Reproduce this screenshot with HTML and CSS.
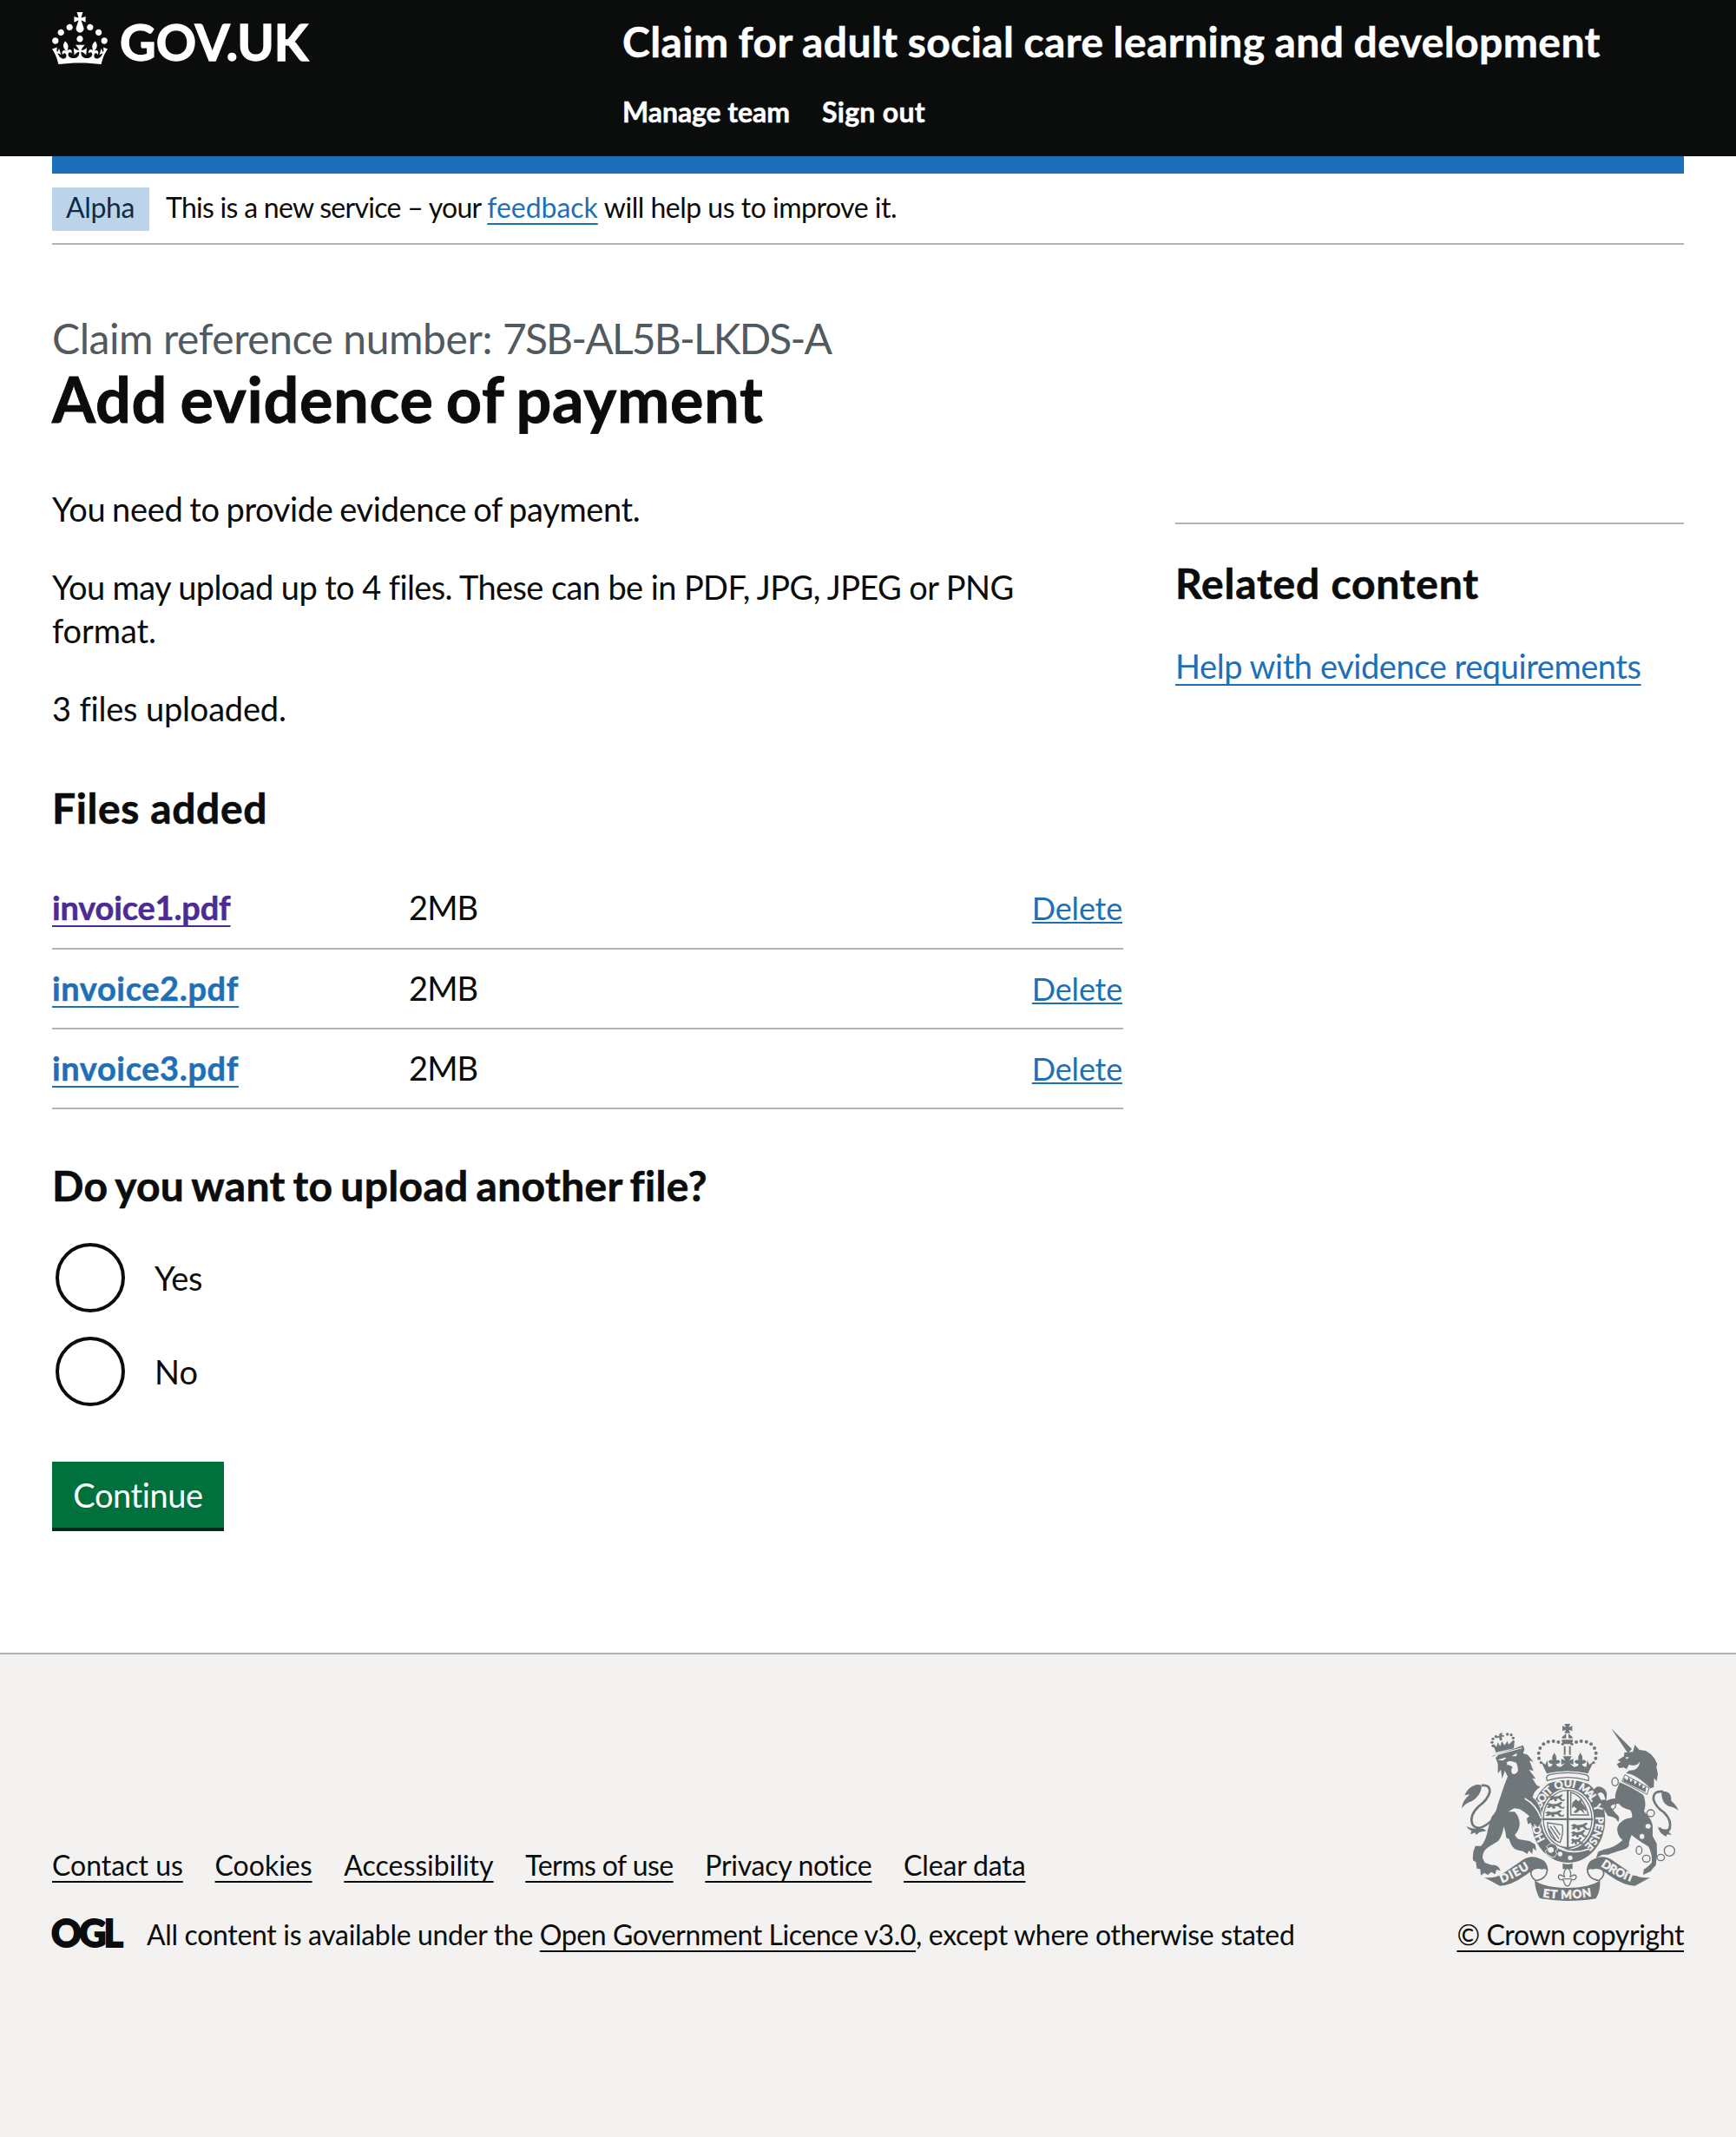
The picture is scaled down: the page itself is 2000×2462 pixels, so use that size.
FILE: index.html
```html
<!DOCTYPE html>
<html lang="en">
<head>
<meta charset="utf-8">
<title>Add evidence of payment</title>
<link rel="stylesheet" href="styles.css">
</head>
<body>
<header class="header">
  <div class="header-inner">
    <svg class="logo" viewBox="0 0 149 30" aria-label="GOV.UK">
      <path d="M22.6 10.4c-1 .4-2-.1-2.4-1-.4-.9.1-2 1-2.4.9-.4 2 .1 2.4 1s-.1 2-1 2.4m-5.9 6.7c-.9.4-2-.1-2.4-1-.4-.9.1-2 1-2.4.9-.4 2 .1 2.4 1s-.1 2-1 2.4m10.8-3.7c-1 .4-2-.1-2.4-1-.4-.9.1-2 1-2.4.9-.4 2 .1 2.4 1s0 2-1 2.4m3.3 4.8c-1 .4-2-.1-2.4-1-.4-.9.1-2 1-2.4.9-.4 2 .1 2.4 1s-.1 2-1 2.4M17 4.7l2.3 1.2V2.5l-2.3.7-.2-.2.9-3h-3.4l.9 3-.2.2c-.1.1-2.3-.7-2.3-.7v3.4L15 4.7c.1.1.1.2.2.2l-1.3 4c-.1.2-.1.4-.1.6 0 1.1.8 2 1.9 2.2h.7c1-.2 1.9-1.1 1.9-2.1 0-.2 0-.4-.1-.6l-1.3-4c-.1-.2 0-.2.1-.3m-7.6 5.7c.9.4 2-.1 2.4-1 .4-.9-.1-2-1-2.4-.9-.4-2 .1-2.4 1s0 2 1 2.4m-5 3c.9.4 2-.1 2.4-1 .4-.9-.1-2-1-2.4-.9-.4-2 .1-2.4 1s.1 2 1 2.4m-3.2 4.8c.9.4 2-.1 2.4-1 .4-.9-.1-2-1-2.4-.9-.4-2 .1-2.4 1s0 2 1 2.4m14.8 11c4.4 0 8.6.3 12.3.8 1.1-4.5 2.4-7 3.7-8.8l-2.5-.9c.2 1.3.3 1.9 0 2.7-.4-.4-.8-1.1-1.1-2.3l-1.2 4c.7-.5 1.3-.8 2-.9-1.1 2.5-2.6 3.1-3.5 3-1.1-.2-1.7-1.2-1.5-2.1.3-1.2 1.5-1.5 2.1-.1 1.1-2.3-.8-3-2-2.3 1.9-1.9 2.1-3.5.6-5.6-2.1 1.6-2.1 3.2-1.2 5.5-1.2-1.4-3.2-.6-2.5 1.6.9-1.4 2.1-.5 1.9.8-.2 1.1-1.7 2.1-3.5 1.9-2.7-.2-2.9-2.1-2.9-3.6.7-.1 1.9.5 2.9 1.9l.4-4.3c-1.1 1.1-2.1 1.4-3.2 1.4.4-1.2 2.1-3 2.1-3h-5.4s1.7 1.9 2.1 3c-1.1 0-2.1-.2-3.2-1.4l.4 4.3c1-1.4 2.2-2 2.9-1.9-.1 1.5-.2 3.4-2.9 3.6-1.9.2-3.4-.8-3.5-1.9-.2-1.3 1-2.2 1.9-.8.7-2.3-1.2-3-2.5-1.6.9-2.2.9-3.9-1.2-5.5-1.5 2-1.3 3.7.6 5.6-1.2-.7-3.1 0-2 2.3.6-1.4 1.8-1.1 2.1.1.2.9-.3 1.9-1.5 2.1-.9.2-2.4-.5-3.5-3 .6 0 1.2.3 2 .9l-1.2-4c-.3 1.1-.7 1.9-1.1 2.3-.3-.8-.2-1.4 0-2.7l-2.9.9C1.3 23 2.6 25.5 3.7 30c3.7-.5 7.9-.8 12.3-.8"/>
      <text class="logo-text" x="39" y="28" textLength="108.6" lengthAdjust="spacingAndGlyphs">GOV.UK</text>
    </svg>
    <div class="header-content">
      <div class="service-name">Claim for adult social care learning and development</div>
      <nav class="nav"><a class="nav-team">Manage team</a><a class="nav-out">Sign out</a></nav>
    </div>
  </div>
</header>
<div class="container">
  <div class="brand-bar"></div>
  <div class="phase-banner">
    <strong class="tag">Alpha</strong>
    <p class="phase-text"><span class="phase-start">This is a new service – your </span><a class="link phase-link">feedback</a><span class="phase-end"> will help us to improve it.</span></p>
  </div>
  <main>
    <span class="caption">Claim reference number: <span class="reference">7SB-AL5B-LKDS-A</span></span>
    <h1 class="title">Add evidence of payment</h1>
    <div class="columns">
      <div class="primary">
        <p class="body intro">You need to provide evidence of payment.</p>
        <p class="body"><span class="limits">You may upload up to 4 files. These can be in PDF, JPG, JPEG or PNG</span> format.</p>
        <p class="body count">3 files uploaded.</p>
        <h2 class="heading files-heading">Files added</h2>
        <dl class="files">
          <div class="row"><dt><a class="link name visited">invoice1.pdf</a></dt><dd class="size">2MB</dd><dd class="action"><a class="link delete">Delete</a></dd></div>
          <div class="row"><dt><a class="link name">invoice2.pdf</a></dt><dd class="size">2MB</dd><dd class="action"><a class="link delete">Delete</a></dd></div>
          <div class="row"><dt><a class="link name">invoice3.pdf</a></dt><dd class="size">2MB</dd><dd class="action"><a class="link delete">Delete</a></dd></div>
        </dl>
        <h2 class="heading question">Do you want to upload another file?</h2>
        <div class="radios">
          <label class="radio"><span class="circle"></span><span class="yes">Yes</span></label>
          <label class="radio"><span class="circle"></span><span>No</span></label>
        </div>
        <button class="button">Continue</button>
      </div>
      <aside class="related">
        <h2 class="heading related-heading">Related content</h2>
        <a class="link related-link">Help with evidence requirements</a>
      </aside>
    </div>
  </main>
</div>
<footer class="footer">
  <div class="footer-inner">
    <div class="meta">
      <nav class="footer-links"><a class="f-contact">Contact us</a><a class="f-cookies">Cookies</a><a class="f-access">Accessibility</a><a class="f-terms">Terms of use</a><a class="f-privacy">Privacy notice</a><a class="f-clear">Clear data</a></nav>
      <div class="licence">
        <svg class="ogl" viewBox="0 0 82 36"><text class="ogl-text" x="-1" y="31.5" textLength="83" lengthAdjust="spacing">OGL</text></svg>
        <span>All content is available under the <a class="f-ogl">Open Government Licence v3.0</a>, except where otherwise stated</span>
      </div>
    </div>
    <div class="copyright">
      <svg class="crest" viewBox="69 75 756 618">
        <defs>
          <path id="g-ho" d="M361 478A97 112 0 0 1 341 421"/>
          <path id="g-soit" d="M347 370A97 112 0 0 1 392 310"/>
          <path id="g-qui" d="M397 307A97 112 0 0 1 468 302"/>
          <path id="g-mal" d="M473 304A97 112 0 0 1 522 352"/>
          <path id="g-y" d="M525 360A97 112 0 0 1 534 388"/>
          <path id="g-pense" d="M535 399A97 112 0 0 1 488 505"/>
          <path id="r-dieu" d="M211 628Q262 609 316 572"/>
          <path id="r-mon" d="M352 676Q437 690 524 673"/>
          <path id="r-droit" d="M552 569Q604 606 672 629"/>
          <g id="beads"><circle cx="421" cy="148" r="5"/><circle cx="406" cy="141" r="6"/><circle cx="389" cy="138" r="6"/><circle cx="371" cy="140" r="6"/><circle cx="355" cy="148" r="6"/><circle cx="343" cy="162" r="6"/><circle cx="338" cy="179" r="6"/><circle cx="339" cy="197" r="6"/><circle cx="346" cy="212" r="5"/></g>
          <path id="passant" d="M0 5l8-5 8 4 12-2 10-7 4 4-7 8 6 9 7-3-3 8-9-1-6-8-8 1 2 7-7 2-3-9-6 6-7-2 5-7z"/>
        </defs>
        <g class="ink">
          <path d="M427 78h20l-5 12 12-5v18l-12-5 5 12h-20l5-12-12 5V85l12 5zM420 122l13-10v16h-15zM454 122l-13-10v16h15zM418 133h38q2 9-8 15h-22q-10-6-8-15zM425 155h6v30h-6zM443 155h6v30h-6z"/>
          <use href="#beads"/><use href="#beads" transform="matrix(-1 0 0 1 874 0)"/>
          <path d="M366 250L346 208l15 11 7-15 3 22q13 2 15-10-12 2-14-8 5-9 14-4-5-10 6-26 11 16 6 26 9-5 14 4-2 10-14 8 3 13 18 10l13-12-13 5v-20l13 6-7-15h30l-7 15 13-6v20l-13-5 13 12q15 3 18-10-12 2-14-8 5-9 14-4-5-10 6-26 11 16 6 26 9-5 14 4-2 10-14 8 2 12 15 10l3-22 7 15 15-11-20 42q-71-17-142 0z"/>
          <ellipse cx="440" cy="410" rx="128" ry="148"/>
          <path class="halo" d="M374 254q63-14 128 0 13 6 8 26-71-26-143 0-8-18 7-26z"/>
          <path class="line" d="M374 254q63-14 128 0 13 6 8 20-71-22-143 0-6-14 7-20z"/>
        </g>
        <g class="paper">
          <ellipse cx="438" cy="407" rx="91" ry="106"/>
          <circle cx="412" cy="528" r="8"/><circle cx="447" cy="541" r="8"/>
        </g>
        <path class="gap" d="M385 492q55 45 128 18M345 352l-34-6M324 434l18-6"/>
        <g class="ink">
          <ellipse class="line" cx="438" cy="407" rx="84" ry="99"/>
          <path d="M435 306h7v98h84v7h-84v93h18l-22 10-22-10h19v-93h-84v-7h84z"/>
          <use href="#passant" transform="translate(374 326) scale(1.15 .9)"/><use href="#passant" transform="translate(364 352) scale(1.35 .9)"/><use href="#passant" transform="translate(360 380) scale(1.4 .9)"/>
          <use href="#passant" transform="translate(449 424) scale(1.4 1)"/><use href="#passant" transform="translate(449 449) scale(1.2 1)"/><use href="#passant" transform="translate(449 474) scale(.9 1)"/>
          <path class="line" d="M449 315q43 10 61 78h-61zM368 420l52 8q4 30-8 60-40-10-44-68zM378 432l30 44M390 430l22 32M372 440l26 42"/>
          <path d="M455 350l12-12 8 8 12-10-2 12 15 20 2 12-12-8 8 18-16-14-14 10-10-2 12-12-10-8-8 6z"/>
        </g>
        <g class="crest-text">
          <text><textPath href="#g-ho" textLength="55">HO</textPath></text>
          <text><textPath href="#g-soit" textLength="73">SOIT</textPath></text>
          <text><textPath href="#g-qui" textLength="68">QUI</textPath></text>
          <text><textPath href="#g-mal" textLength="66">MAL</textPath></text>
          <text><textPath href="#g-y">Y</textPath></text>
          <text><textPath href="#g-pense" textLength="112">PENSE</textPath></text>
        </g>
        <g class="ink edged">
          <path d="M380 492q22 2 22 20l-8 6 6 8-8 12q-24-2-30-20l10-8-6-8z"/>
          <circle class="paper" cx="380" cy="514" r="8"/>
        </g>
        <!-- lion -->
        <g class="ink edged">
          <path d="M174 193L190 182 240 168 284 152l5 14-5 14 16 5 20 24-14-4 14 36-16-5 24 32-12-2 12 20q4 8 16 10-22 12-27 36 22 16 28 48l4 24-3 18-12 14-11-12-5 14-8-18-9 5-4-20 9-8-17-14-16-10-20-3-20 12 22 0q18 20 17 45-2 20-16 34 5 14 18 17l32 5 20 12 4 22-12-9-2 20-12-12-5 12-16-10-20-4q-20-8-27-38l-10-4-3-20-6-20q-3 30-18 50l-38 24q-17 12-17 36l8 16 24 8q24-2 30 20l-14-4-4 16-14-8-12 10-12-7-12 9-2-22-12-2-3-22-10-6q-3-28 8-50l20 0q18-20 24-60l12-40q18-20 20-38l24-72 12-30-10-20-9 28-5-32-10 14v-34l-8-20 12-14z"/>
        </g>
        <g class="ink">
          <path class="tail" d="M140 291q30-4 29 22-6 26-38 50-34 32-22 62 22 32 72-18"/>
          <path d="M72 370q2-26 28-48l-18 3q10-26 38-36 24-4 20 12-4 26-32 44-22 6-36 25zM88 432q24 12 58 8l12 8-24 4-12 10-4-8-16 6 4-12q-12-4-18-16z"/>
          <path d="M184 159l70-14-2 18-62 14zM203 112l10-4-3 8 7 0 1 8-8-2 2 12-8 2-3-12-7 5-1-8 8-1z"/>
          <path d="M182 160l2-12 8 10 5-16 8 14 6-18 9 15 10-16 4 13 10-10 8 5-4 12z"/>
          <circle cx="180" cy="154" r="5"/><circle cx="177" cy="142" r="5"/><circle cx="180" cy="130" r="5"/><circle cx="190" cy="122" r="5"/><circle cx="230" cy="114" r="5"/><circle cx="243" cy="116" r="5"/><circle cx="250" cy="127" r="5"/><circle cx="250" cy="140" r="5"/>
        </g>
        <path class="paper" d="M196 203l26-9 4 3-12 8zM244 190l19-11-2 11zM226 212q8-8 20-4l14 4q8 14 6 30-8 14-20 8-6-14 2-22-8-10-22-8l4-4zM186 184l94-24v3l-94 25z"/>
        <path class="gap" d="M290 336q40 22 56 68"/>
        <!-- unicorn -->
        <g class="ink">
          <path d="M588 93l72 72-14 14zM634 177l30-2 6-25 16 18 22 3 18 12 12 14 10 20-3 10 5 24-4 26-9-12-1 32-12 4q-50-50-84-52l10-10q34 2 38-30-14 20-38 10l-8 16-10-6-16 2-8-14 14-8-11-5 22-14z"/>
          <path d="M618 280q46 20 82 44 12 30 2 56 34 34 30 60l0 26 14 26 1 40-4 34q-10 10-18 22l-26 12 2-18 16-12 12-12q2-32-12-56-40-24-58-40-6 14-9 28 5 16-22 24-34 10-50 16l-20 0-22 12 8-22 20-8q34-4 64-32-22-18-18-44 10-30 50-34 4-14-6-26-30-6-38-22-20 0-30 10l20 26q16 10 7 28l-8-12-12-6-16-4-14-24-6-18-16-4q-6-8 28-10l-6-18-10-8-16 8-10-12q10-22 30-12 20 10 16 34l-2 12q20-10 32-8-2-12 5-30z"/>
          <path class="tail" d="M768 312q-36-4-33 28 8 26 36 44 30 30 18 58-14 16-34-4"/>
          <path d="M762 312q36-4 34 32 16 12 26 34-10-10-36-16-24-10-24-50zM750 432q8 16 40 8l8-4-10 16 10 10-16-2-4 8q-26-14-28-36z"/>
          <g class="chain"><ellipse cx="602" cy="278" rx="11" ry="14"/><ellipse cx="592" cy="358" rx="12" ry="16"/><ellipse cx="725" cy="387" rx="13" ry="12"/><ellipse cx="685" cy="515" rx="10" ry="14"/><ellipse cx="710" cy="544" rx="13" ry="12"/><ellipse cx="760" cy="540" rx="13" ry="11"/><circle cx="790" cy="517" r="18"/></g>
        </g>
        <g class="paper"><ellipse cx="583" cy="300" rx="6" ry="8"/><ellipse cx="716" cy="432" rx="9" ry="8"/><ellipse cx="695" cy="467" rx="8" ry="9"/><path d="M636 195l14-3-6 8z"/></g>
        <path class="collar" d="M636 254l84 46-8 22-86-46z"/>
        <path class="ink" d="M630 276l4-12 10 10 6-14 6 20 10-12 4 20 12-14 3 20 12-10 0 18 12-8-2 20z"/>
        <!-- motto ribbon -->
        <g class="ink">
          <path class="curl" d="M318 548q44-10 50 34-2 32-40 38-26-20-12-38 16-10 38-2M556 548q-44-10-50 34 2 32 40 38 26-20 12-38-16-10-38-2"/>
          <path d="M150 609q36 4 62-12l70-48q30-20 62-4 26 14 24 40-16-12-44-6l-34 24q-48 34-86 35zM724 609q-36 4-62-12l-70-48q-30-20-62-4-26 14-24 40 16-12 44-6l34 24q48 34 86 35z"/>
          <path d="M324 620q40 25 113 25t113-25q2 34-14 62-46 8-99 8t-96-10q-14-24-17-60z"/>
          <path d="M421 560q17 6 34 0v20h-34z"/>
          <path class="line" d="M437 574q18 18 9 34 20-16 22 0-4 12-16 8l-4 10q-4 14-11 12-7 2-11-12l-4-10q-12 4-16-8 2-16 22 0-9-16 9-34zM422 614h30"/>
        </g>
        <g class="crest-text ribbon-text">
          <text><textPath href="#r-dieu" textLength="108">DIEU</textPath></text>
          <text><textPath href="#r-mon" textLength="170">ET MON</textPath></text>
          <text><textPath href="#r-droit" textLength="124">DROIT</textPath></text>
        </g>
      </svg>
      <a class="f-crown">© Crown copyright</a>
    </div>
  </div>
</footer>
</body>
</html>
```
FILE: styles.css
```css
* { box-sizing: border-box; }

body, p, h1, h2, dl, dd { margin: 0; }

body {
  background: #fff;
  color: #0b0c0c;
  font-family: Lato, "Noto Sans", sans-serif;
  font-size: 38px;
  line-height: 50px;
}

/* Header */
.header { height: 180px; background: #0b0c0c; color: #fff; }
.header-inner { display: grid; grid-template-columns: 656px 1fr; margin: 0 60px; }
.logo { width: 298px; height: 60px; margin-top: 14px; fill: #fff; overflow: visible; }
.logo-text { font-size: 29px; font-weight: 700; stroke: #fff; stroke-width: .7px; }
.header-content { padding: 18px 0 0 1px; font-weight: 700; -webkit-text-stroke: .5px; }
.service-name { font-size: 48px; line-height: 60px; letter-spacing: .42px; word-spacing: -1px; }
.nav { display: flex; gap: 37px; margin-top: 31px; font-size: 32px; line-height: 40px; }
.nav-team { letter-spacing: -.07px; }
.nav-out { letter-spacing: .29px; }

/* Page frame */
.container { margin: 0 60px; }
.brand-bar { height: 20px; background: #1d70b8; }

.link {
  color: #1d70b8;
  text-decoration: underline 2px;
  text-underline-offset: 6px;
  text-decoration-skip-ink: none;
}

.visited { color: #4c2c92; }

/* Phase banner */
.phase-banner {
  display: flex;
  height: 82px;
  padding-top: 16px;
  border-bottom: 2px solid #b1b4b6;
  font-size: 32px;
  line-height: 40px;
}

.tag {
  width: 112px;
  height: 50px;
  padding: 3px 0 0 16px;
  background: #bbd4ea;
  color: #0c2d4a;
  font-weight: 400;
  letter-spacing: -.37px;
}

.phase-text { margin: 3px 0 0 19px; white-space: nowrap; }
.phase-start { letter-spacing: -.72px; }
.phase-link { letter-spacing: -.03px; }
.phase-end { letter-spacing: -.5px; }

/* Page heading */
.caption {
  display: block;
  padding-top: 78px;
  color: #505a5f;
  font-size: 48px;
  line-height: 60px;
  letter-spacing: -.43px;
}
.reference { letter-spacing: -1.85px; }

.title {
  font-size: 72px;
  line-height: 78px;
  letter-spacing: .74px;
  word-spacing: -4px;
  -webkit-text-stroke: .9px;
}

/* Content */
.columns { display: grid; grid-template-columns: 1234px 586px; gap: 60px; margin-top: 63px; }
.body { max-width: 1200px; margin-bottom: 40px; letter-spacing: -.1px; }
.intro { letter-spacing: -.35px; word-spacing: -1.5px; }
.limits { letter-spacing: -.61px; }
.count { margin-bottom: 60px; letter-spacing: -.19px; }
.heading { font-size: 48px; font-weight: 700; line-height: 60px; -webkit-text-stroke: .6px; }
.files-heading { letter-spacing: .61px; }

.files { margin-top: 40px; }
.row {
  display: grid;
  grid-template-columns: 411px 1fr auto;
  height: 92px;
  padding-top: 19px;
  border-bottom: 2px solid #b1b4b6;
}
.row:first-child { height: 93px; }
.name { font-weight: 700; letter-spacing: .61px; -webkit-text-stroke: .5px; }
.name.visited { letter-spacing: -.18px; }
.size { letter-spacing: -.9px; }
.action { padding-right: 1px; }
.delete { font-size: 36px; letter-spacing: -.2px; text-underline-offset: 2px; }

.question { margin-top: 58px; letter-spacing: .3px; word-spacing: -3px; }
.radios { display: grid; gap: 28px; margin: 36px 0 64px 4px; }
.radio { display: flex; align-items: center; gap: 34px; height: 80px; }
.circle { width: 80px; height: 80px; border: 4px solid #0b0c0c; border-radius: 50%; }
.yes { letter-spacing: -.36px; }

.button {
  display: block;
  width: 198px;
  height: 80px;
  padding: 0 0 1px;
  border: 0;
  border-bottom: 4px solid #002d18;
  background: #00703c;
  color: #fff;
  font: inherit;
  letter-spacing: -.42px;
}

.related { align-self: start; margin-top: 41px; border-top: 2px solid #b1b4b6; }
.related-heading { margin: 38px 0 40px; letter-spacing: .8px; }
.related-link { letter-spacing: -.43px; }

/* Footer */
.footer {
  height: 558px;
  margin-top: 140px;
  border-top: 2px solid #b1b4b6;
  background: #f3f2f1;
  font-size: 32px;
  line-height: 40px;
  white-space: nowrap;
}
.footer-inner {
  display: flex;
  justify-content: space-between;
  align-items: flex-end;
  height: 343px;
  margin: 0 60px;
}
.footer a {
  text-decoration: underline 2px;
  text-underline-offset: 6px;
  text-decoration-skip-ink: none;
}
.footer-links { display: flex; gap: 36.7px; margin-bottom: 40px; }
.f-terms { letter-spacing: -.56px; }
.f-privacy { letter-spacing: -.3px; }
.f-clear { letter-spacing: -.16px; }
.licence { display: flex; align-items: center; gap: 27px; letter-spacing: -.33px; }
.f-ogl { letter-spacing: -.4px; }
.f-crown { letter-spacing: -.4px; }
.ogl { width: 82px; height: 36px; overflow: visible; fill: #0b0c0c; }
.ogl-text { font-size: 43px; font-weight: 900; letter-spacing: 0; stroke: #0b0c0c; stroke-width: 1.8px; }
.copyright { display: flex; flex-direction: column; align-items: flex-end; }

/* Royal coat of arms */
.crest { width: 252px; height: 206px; margin: 0 5px 18px 0; }
.ink { fill: #6f777b; }
.paper { fill: #f3f2f1; }
.edged { stroke: #f3f2f1; stroke-width: 4px; paint-order: stroke; }
.halo { fill: #f3f2f1; stroke: #f3f2f1; stroke-width: 10px; }
.line { fill: none; stroke: #6f777b; stroke-width: 4px; }
.gap { fill: none; stroke: #f3f2f1; stroke-width: 5px; }
.tail { fill: none; stroke: #6f777b; stroke-width: 8px; }
.chain { fill: none; stroke: #6f777b; stroke-width: 4px; }
.collar { fill: #f3f2f1; stroke: #6f777b; stroke-width: 3px; }
.curl { fill: #f3f2f1; stroke: #6f777b; stroke-width: 5px; }
.crest-text { fill: #f3f2f1; stroke: #f3f2f1; stroke-width: 1.5px; font-size: 37px; font-weight: 700; letter-spacing: 0; }
.ribbon-text { font-size: 40px; font-weight: 900; }
```
